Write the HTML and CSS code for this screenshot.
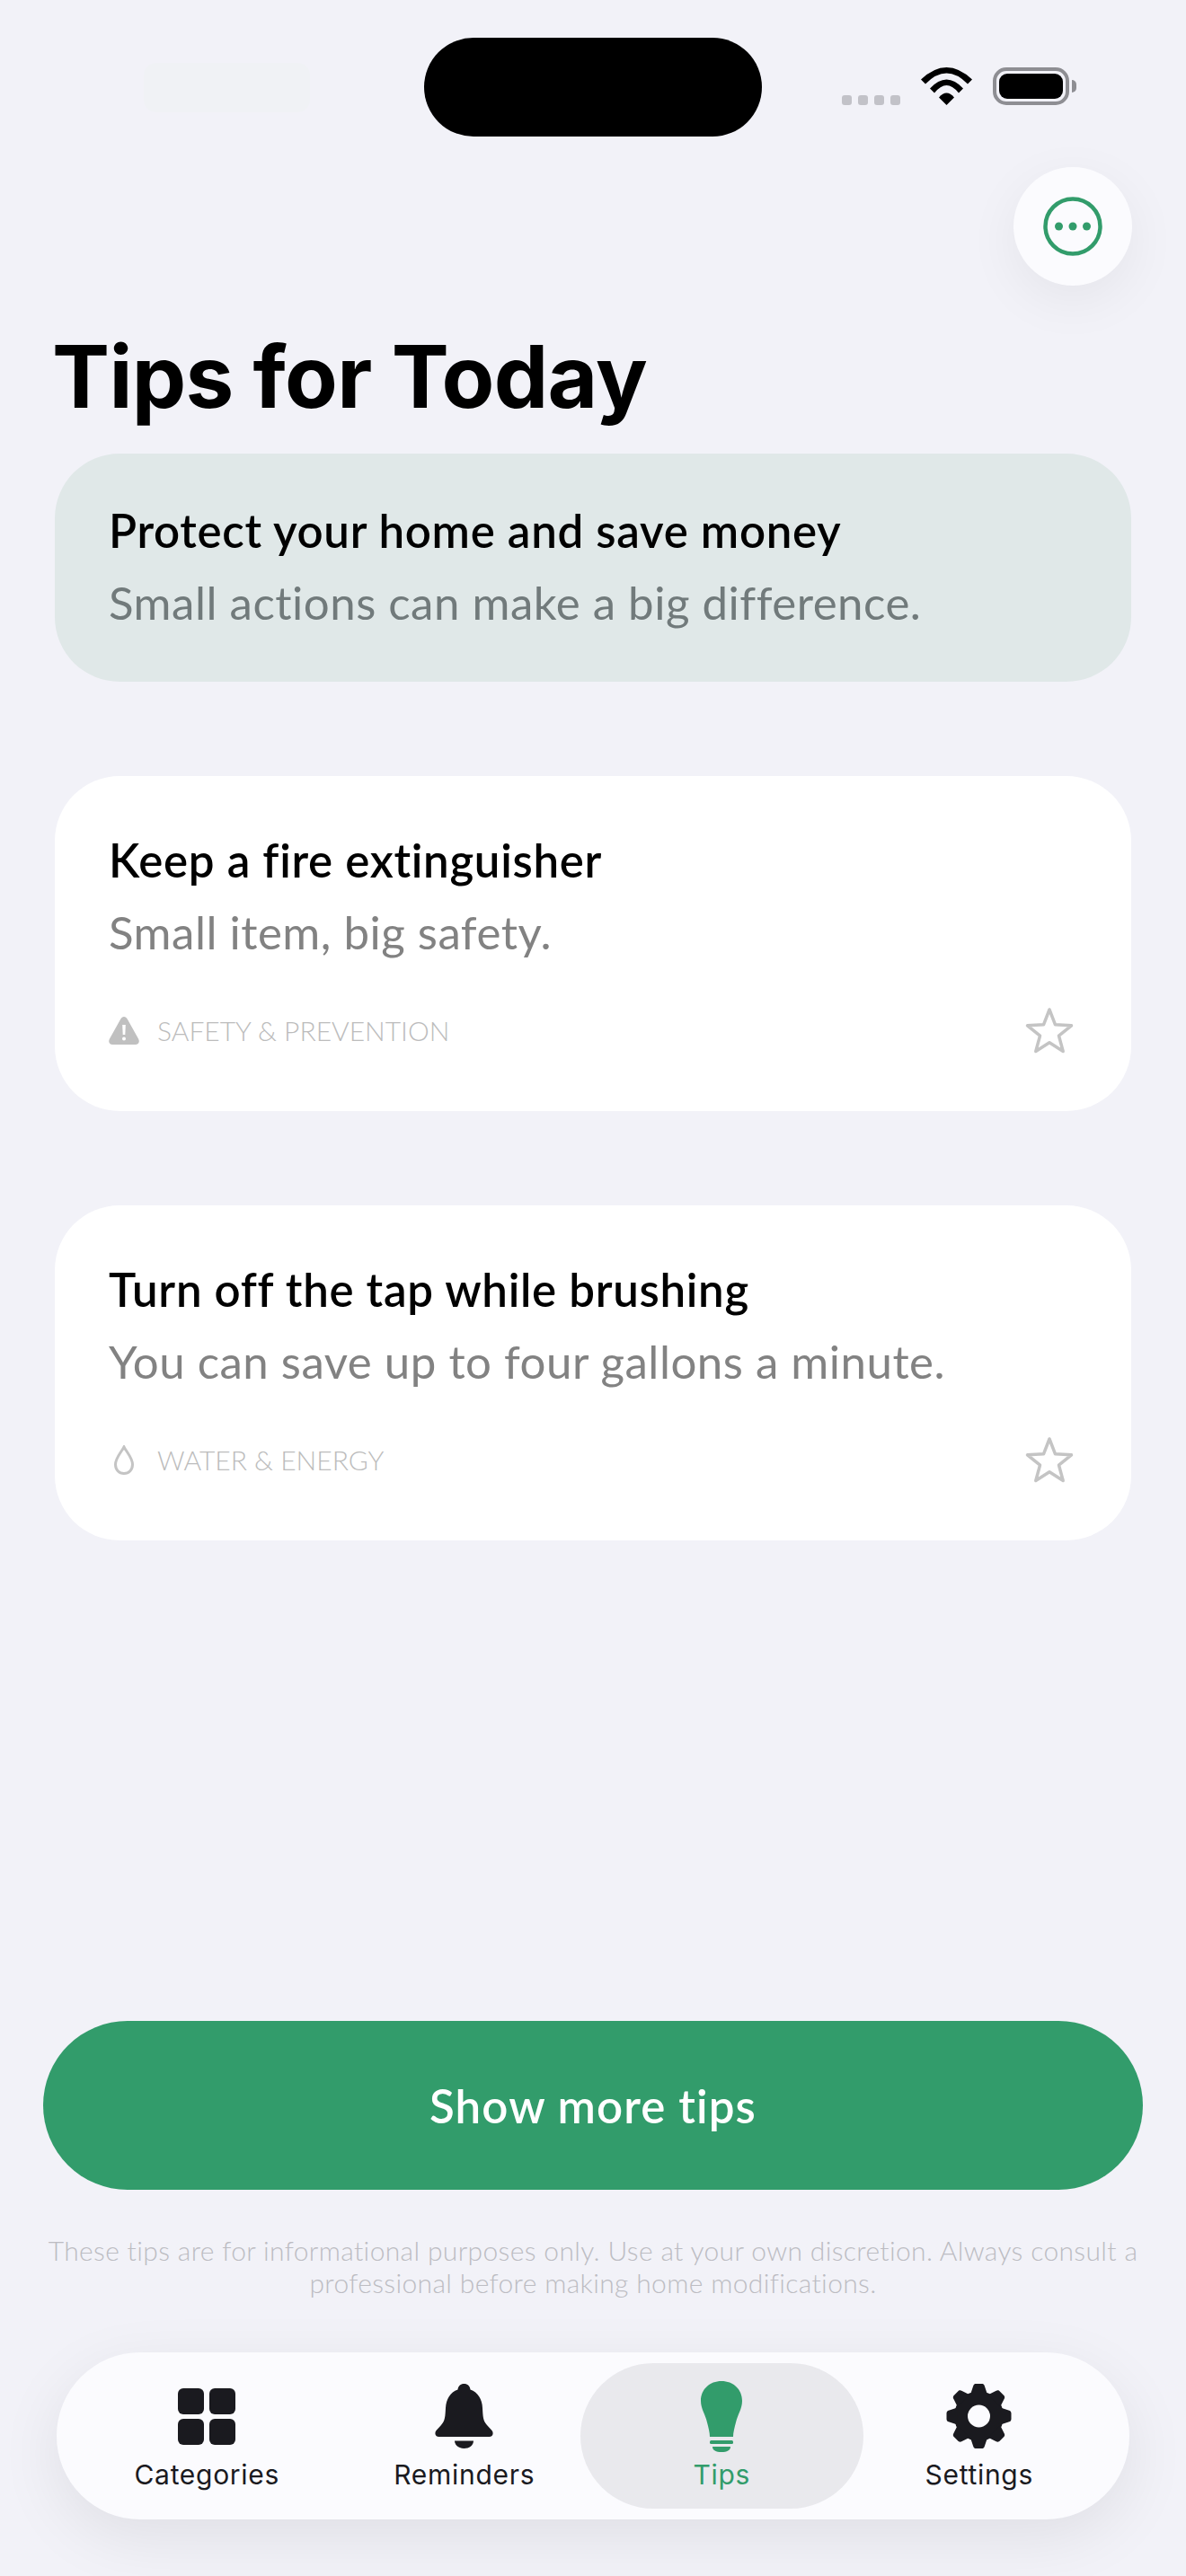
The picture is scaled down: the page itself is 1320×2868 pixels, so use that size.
FILE: index.html
```html
<!DOCTYPE html>
<html lang="en">
<head>
    <meta charset="UTF-8">
    <meta name="viewport" content="width=device-width, initial-scale=1.0">
    <title>Tips for Today</title>
    <link rel="stylesheet" href="styles.css">
</head>
<body>
    <div class="screen">
        <div class="status-bar">
            <div class="status-left"><div class="time-blur"></div></div>
            <div class="island"></div>
            <div class="status-right">
                <div class="signal"><span></span><span></span><span></span><span></span></div>
                <svg class="wifi" width="57" height="42" viewBox="0 0 57 42">
                    <path d="M0 13.5Q28.5 -13.5 57 13.5L52 18.5Q28.5 -5.5 5 18.5Z"/>
                    <path d="M10 23.5Q28.5 3.5 47 23.5L42 28.5Q28.5 11.5 15 28.5Z"/>
                    <path d="M20 33.5Q28.5 23.5 37 33.5L28.5 42Z"/>
                </svg>
                <div class="battery"><div class="battery-level"></div></div>
                <div class="battery-cap"></div>
            </div>
        </div>

        <button class="menu-btn" type="button" aria-label="More">
            <svg width="66" height="66" viewBox="0 0 66 66" fill="none">
                <circle cx="33" cy="33" r="30.5" stroke="#329c6b" stroke-width="4.5"/>
                <circle cx="17.5" cy="33" r="4.5" fill="#329c6b"/>
                <circle cx="33" cy="33" r="4.5" fill="#329c6b"/>
                <circle cx="48.5" cy="33" r="4.5" fill="#329c6b"/>
            </svg>
        </button>

        <h1>Tips for Today</h1>

        <div class="card card-intro">
            <h2>Protect your home and save money</h2>
            <p>Small actions can make a big difference.</p>
        </div>

        <div class="card">
            <h2>Keep a fire extinguisher</h2>
            <p>Small item, big safety.</p>
            <div class="card-foot">
                <div class="tag">
                    <svg class="tag-icon" width="34" height="31" viewBox="0 0 34 31">
                        <path d="M17 0C15.300 0 14.200 1 13.300 2.600L1 24.500C-.9 27.800 .8 31 4.500 31H29.500C33.200 31 34.900 27.800 33 24.500L20.700 2.600C19.800 1 18.700 0 17 0Z" fill="#c0c0c0"/>
                        <path d="M15.200 9H18.800L18.300 20H15.700Z" fill="#fff"/>
                        <circle cx="17" cy="24.500" r="2" fill="#fff"/>
                    </svg>
                    <span>SAFETY &amp; PREVENTION</span>
                </div>
                <svg class="star" width="54" height="52" viewBox="0 0 54 52" fill="none">
                    <path d="M27 3L33.500 19.800L51.500 20.800L37.500 32.200L42.200 49.500L27 39.800L11.800 49.500L16.500 32.200L2.500 20.800L20.500 19.800Z" stroke="#c4c4c4" stroke-width="3.500" stroke-linejoin="round"/>
                </svg>
            </div>
        </div>

        <div class="card">
            <h2>Turn off the tap while brushing</h2>
            <p>You can save up to four gallons a minute.</p>
            <div class="card-foot">
                <div class="tag">
                    <svg class="tag-icon" width="34" height="33" viewBox="0 0 34 33" fill="none">
                        <path d="M17 2C14.500 7 7.500 14 7.500 21.500C7.500 27.500 11.500 31.500 17 31.500C22.500 31.500 26.500 27.500 26.500 21.500C26.500 14 19.500 7 17 2Z" stroke="#c4c4c4" stroke-width="3"/>
                    </svg>
                    <span>WATER &amp; ENERGY</span>
                </div>
                <svg class="star" width="54" height="52" viewBox="0 0 54 52" fill="none">
                    <path d="M27 3L33.500 19.800L51.500 20.800L37.500 32.200L42.200 49.500L27 39.800L11.800 49.500L16.500 32.200L2.500 20.800L20.500 19.800Z" stroke="#c4c4c4" stroke-width="3.500" stroke-linejoin="round"/>
                </svg>
            </div>
        </div>

        <div class="bottom">
            <button class="more-btn" type="button">Show more tips</button>
            <p class="disclaimer">These tips are for informational purposes only. Use at your own discretion. Always consult a<br>professional before making home modifications.</p>

            <nav class="tabbar">
                <a class="tab">
                    <span class="tab-icon">
                        <svg width="64" height="63" viewBox="0 0 64 63" fill="#1a1a1f">
                            <rect width="29" height="29" rx="6"/>
                            <rect x="35" width="29" height="29" rx="6"/>
                            <rect y="34" width="29" height="29" rx="6"/>
                            <rect x="35" y="34" width="29" height="29" rx="6"/>
                        </svg>
                    </span>
                    <span>Categories</span>
                </a>
                <a class="tab">
                    <span class="tab-icon">
                        <svg width="65" height="72" viewBox="0 0 65 72" fill="#1a1a1f">
                            <path d="M32.500 0C28.500 0 26 2.500 25.500 6.500C17 9.500 12.500 17 12 27C11.500 36 11.500 41 7 46L1.500 52C-1 55.500 1 59 4.500 59H60.500C64 59 66 55.500 63.500 52L58 46C53.500 41 53.500 36 53 27C52.500 17 48 9.500 39.500 6.500C39 2.500 36.500 0 32.500 0Z"/>
                            <path d="M22 63.500H43C43 68.500 38 72 32.500 72C27 72 22 68.500 22 63.500Z"/>
                        </svg>
                    </span>
                    <span>Reminders</span>
                </a>
                <a class="tab tab-active">
                    <span class="tab-icon">
                        <svg width="46" height="79" viewBox="0 0 46 79" fill="#329c6b">
                            <path d="M23 0C10 0 0 9 0 22C0 31 5 37 7 46C8.500 52 10 57 10 62H36C36 57 37.500 52 39 46C41 37 46 31 46 22C46 9 36 0 23 0Z"/>
                            <rect x="10" y="66" width="26" height="4" rx="1.500"/>
                            <path d="M13 73H33C33 77 29 79 23 79C17 79 13 77 13 73Z"/>
                        </svg>
                    </span>
                    <span>Tips</span>
                </a>
                <a class="tab">
                    <span class="tab-icon">
                        <svg width="73" height="72" viewBox="-36.500 -36 73 72" fill="#1a1a1f">
                            <defs><path id="tooth" d="M-9.500 -24L-6.500 -33C-6 -35.500 -4.500 -36 -3 -36H3C4.500 -36 6 -35.500 6.500 -33L9.500 -24Z"/></defs>
                            <circle r="20" fill="none" stroke="#1a1a1f" stroke-width="15"/>
                            <use href="#tooth"/>
                            <use href="#tooth" transform="rotate(45)"/>
                            <use href="#tooth" transform="rotate(90)"/>
                            <use href="#tooth" transform="rotate(135)"/>
                            <use href="#tooth" transform="rotate(180)"/>
                            <use href="#tooth" transform="rotate(225)"/>
                            <use href="#tooth" transform="rotate(270)"/>
                            <use href="#tooth" transform="rotate(315)"/>
                        </svg>
                    </span>
                    <span>Settings</span>
                </a>
            </nav>
        </div>
    </div>
</body>
</html>
```

FILE: styles.css
```css
* {
    box-sizing: border-box;
}
body {
    margin: 0;
    background: #f2f2f8;
    font-family: Lato, "Liberation Sans", sans-serif;
    font-variant-ligatures: none;
}
.screen {
    width: 1320px;
    height: 2868px;
    display: flex;
    flex-direction: column;
    overflow: hidden;
}

/* status bar */
.status-bar {
    display: grid;
    grid-template-columns: 1fr 376px 1fr;
    padding-top: 42px;
}
.time-blur {
    width: 185px;
    height: 55px;
    margin: 28px 0 0 160px;
    border-radius: 14px;
    background: #f0f2f5;
}
.island {
    height: 110px;
    border-radius: 55px;
    background: #000;
}
.status-right {
    display: flex;
    align-items: flex-end;
    height: 42px;
    margin-top: 33px;
    padding-left: 89px;
}
.signal {
    display: flex;
    gap: 7px;
    margin-right: 23px;
}
.signal span {
    width: 11px;
    height: 11px;
    border-radius: 3px;
    background: #c2c2c8;
}
.battery {
    width: 85px;
    height: 42px;
    margin-left: 23px;
    padding: 3px;
    border: 4px solid #8e8e93;
    border-radius: 15px;
}
.battery-level {
    height: 100%;
    border-radius: 9px;
    background: #000;
}
.battery-cap {
    width: 5px;
    height: 14px;
    margin: 0 0 14px 3px;
    border-radius: 0 6px 6px 0;
    background: #8e8e93;
}

.menu-btn {
    align-self: flex-end;
    display: flex;
    align-items: center;
    justify-content: center;
    width: 132px;
    height: 132px;
    margin: 34px 60px 0 0;
    padding: 0;
    border: 0;
    border-radius: 50%;
    background: #fbfbfe;
    box-shadow: 0 16px 60px rgba(0, 0, 0, 0.06);
}

h1 {
    margin: 43px 0 28px 58px;
    font-family: Inter, sans-serif;
    font-size: 96px;
    font-weight: 700;
    line-height: 116px;
    letter-spacing: -0.7px;
    color: #000;
}

/* cards */
.card {
    margin: 0 61px 105px;
    padding: 64px 60px 64px;
    border-radius: 72px;
    background: #fff;
}
.card-intro {
    height: 254px;
    padding-top: 56px;
    background: #e0e8e8;
}
.card h2 {
    margin: 0;
    font-size: 51px;
    font-weight: 600;
    line-height: 60px;
    letter-spacing: 0.7px;
    color: #000;
}
.card p {
    margin: 20px 0 0;
    font-size: 51px;
    font-weight: 400;
    line-height: 60px;
    letter-spacing: 0.5px;
    color: #828282;
}
.card-intro p {
    color: #717a7b;
}
.card-foot {
    display: flex;
    align-items: center;
    justify-content: space-between;
    margin-top: 53px;
}
.tag {
    display: flex;
    align-items: center;
    gap: 20px;
    font-size: 30px;
    font-weight: 300;
    color: #bcbcbc;
}
.star {
    margin-right: 4px;
}

/* bottom part */
.bottom {
    margin-top: auto;
    padding-bottom: 63px;
}
.more-btn {
    display: block;
    width: 1224px;
    height: 188px;
    margin: 0 48px;
    border: 0;
    border-radius: 94px;
    background: #329c6b;
    font-family: Lato, sans-serif;
    font-size: 51px;
    font-weight: 600;
    letter-spacing: 1.1px;
    color: #fff;
}
.disclaimer {
    margin: 49px 0 60px;
    font-size: 30px;
    font-weight: 300;
    line-height: 36px;
    letter-spacing: 0.35px;
    text-align: center;
    color: #bcbcc2;
}
.tabbar {
    display: grid;
    grid-template-columns: repeat(4, 1fr);
    height: 186px;
    margin: 0 63px;
    padding: 12px 24px;
    border-radius: 93px;
    background: #fbfbfe;
    box-shadow: 0 20px 70px rgba(0, 0, 0, 0.08);
}
.tab {
    display: flex;
    flex-direction: column;
    align-items: center;
    padding-top: 19px;
    font-family: Inter, sans-serif;
    font-size: 30px;
    font-weight: 400;
    line-height: 36px;
    letter-spacing: 0.7px;
    color: #1a1a1f;
}
.tab-icon {
    display: flex;
    align-items: center;
    justify-content: center;
    height: 80px;
    margin-bottom: 7px;
}
.tab-active {
    margin: 0 -14px;
    border-radius: 81px;
    background: #e9e9ed;
    color: #329c6b;
}
```
